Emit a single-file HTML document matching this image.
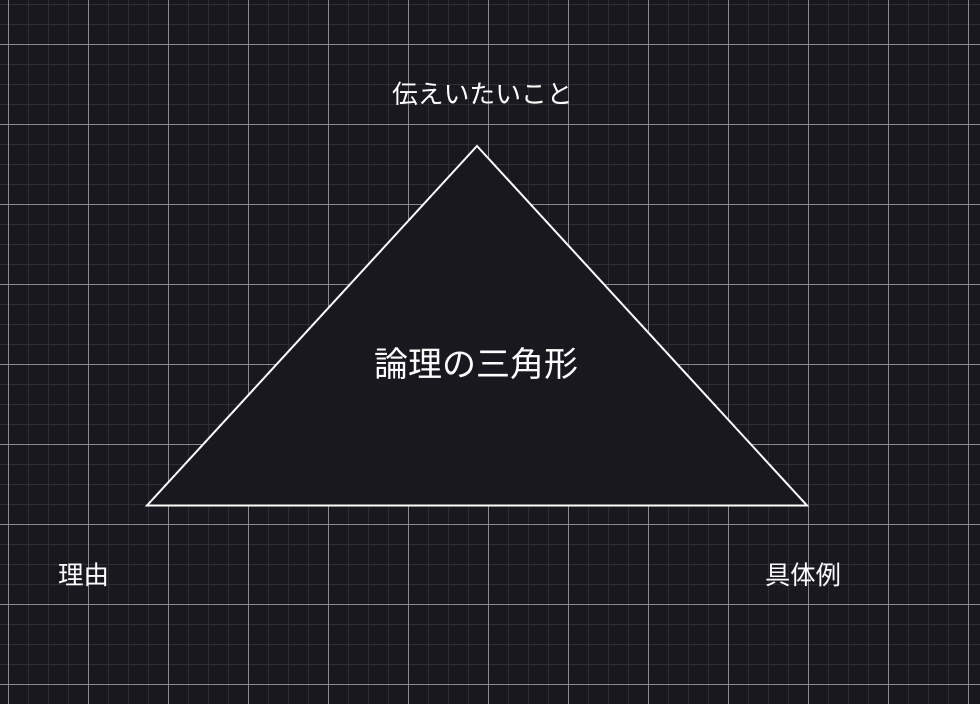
<!DOCTYPE html>
<html><head><meta charset="utf-8"><style>
html,body{margin:0;padding:0}
body{width:980px;height:704px;overflow:hidden;background:#1a181f;position:relative;font-family:"Liberation Sans","Noto Sans CJK JP",sans-serif;color:#fff}
.g{position:absolute;inset:0;
background-image:
linear-gradient(to right,#8a8a8e 1px,transparent 1px),
linear-gradient(to bottom,#8a8a8e 1px,transparent 1px),
linear-gradient(to right,#302e35 1px,transparent 1px),
linear-gradient(to bottom,#302e35 1px,transparent 1px);
background-size:80px 80px,80px 80px,20px 20px,20px 20px;
background-position:8px 0,0 44px,8px 0,0 4px;}
.t{position:absolute;white-space:nowrap;line-height:1}
</style></head><body>
<div class="g"></div>
<svg width="980" height="704" style="position:absolute;left:0;top:0">
<polygon points="477,146 807,505.5 147,505.5" fill="#1a181f" stroke="#fff" stroke-width="2" stroke-linejoin="miter"/>
</svg>
<div class="t" style="left:392px;top:83px;font-size:25.8px">伝えいたいこと</div>
<div class="t" style="left:374px;top:348px;font-size:34px">論理の三角形</div>
<div class="t" style="left:58px;top:564px;font-size:25.5px">理由</div>
<div class="t" style="left:765px;top:564px;font-size:25.3px">具体例</div>
</body></html>
